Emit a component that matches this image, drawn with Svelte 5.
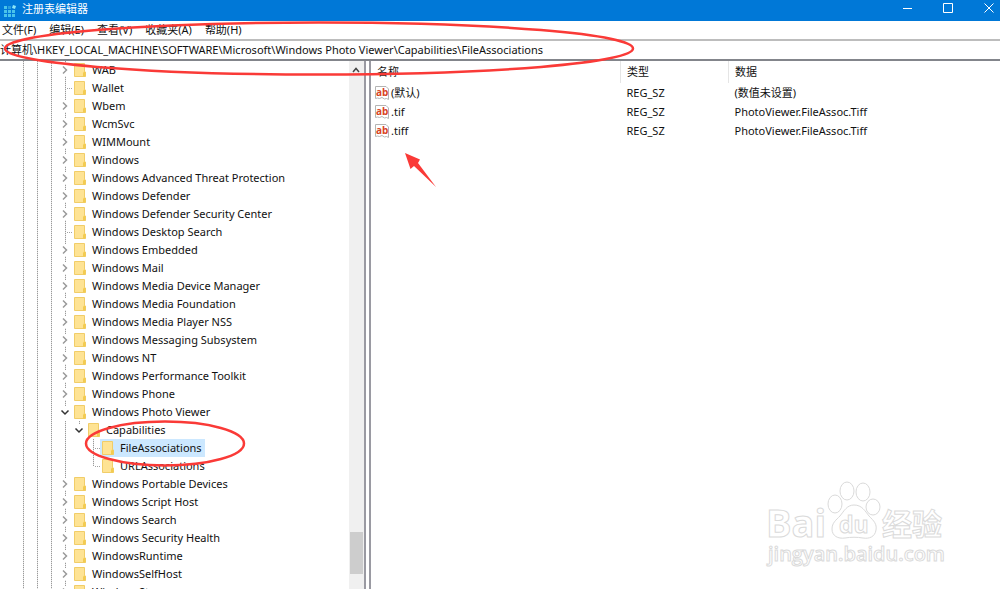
<script lang="ts">
  type Node = { name: string; depth?: number; open?: boolean; leaf?: boolean; last?: boolean };

  const menus = ['文件(F)', '编辑(E)', '查看(V)', '收藏夹(A)', '帮助(H)'];

  const nodes: Node[] = [
    { name: 'WAB' },
    { name: 'Wallet', leaf: true },
    { name: 'Wbem' },
    { name: 'WcmSvc' },
    { name: 'WIMMount' },
    { name: 'Windows' },
    { name: 'Windows Advanced Threat Protection' },
    { name: 'Windows Defender' },
    { name: 'Windows Defender Security Center' },
    { name: 'Windows Desktop Search', leaf: true },
    { name: 'Windows Embedded' },
    { name: 'Windows Mail' },
    { name: 'Windows Media Device Manager' },
    { name: 'Windows Media Foundation' },
    { name: 'Windows Media Player NSS' },
    { name: 'Windows Messaging Subsystem' },
    { name: 'Windows NT' },
    { name: 'Windows Performance Toolkit' },
    { name: 'Windows Phone' },
    { name: 'Windows Photo Viewer', open: true },
    { name: 'Capabilities', depth: 1, open: true },
    { name: 'FileAssociations', depth: 2, leaf: true },
    { name: 'URLAssociations', depth: 2, leaf: true, last: true },
    { name: 'Windows Portable Devices' },
    { name: 'Windows Script Host' },
    { name: 'Windows Search' },
    { name: 'Windows Security Health' },
    { name: 'WindowsRuntime' },
    { name: 'WindowsSelfHost' },
    { name: 'WindowsStore' }
  ];

  const values = [
    { name: '(默认)', type: 'REG_SZ', data: '(数值未设置)' },
    { name: '.tif', type: 'REG_SZ', data: 'PhotoViewer.FileAssoc.Tiff' },
    { name: '.tiff', type: 'REG_SZ', data: 'PhotoViewer.FileAssoc.Tiff' }
  ];

  let selected = $state('FileAssociations');
  let path = $state(
    '计算机\\HKEY_LOCAL_MACHINE\\SOFTWARE\\Microsoft\\Windows Photo Viewer\\Capabilities\\FileAssociations'
  );
</script>

<div class="window">
  <header class="titlebar">
    <svg class="app-icon" viewBox="0 0 14 14" aria-hidden="true">
      <path d="M1 2h3v3H1zM1 6h3v3H1zM1 10h3v3H1zM5 6h3v3H5zM5 10h3v3H5zM9 10h3v3H9zM9 6h3v3H9z" fill="#49c3ea" />
      <path d="M5 2h3v3H5z" fill="#2a9fdc" />
      <path d="M10 1l3 1-1 3-3-1z" fill="#8ce6f7" />
    </svg>
    <span class="title">注册表编辑器</span>
    <div class="controls">
      <button aria-label="最小化">
        <svg viewBox="0 0 10 10"><path d="M0 5.5h9" /></svg>
      </button>
      <button aria-label="最大化">
        <svg viewBox="0 0 10 10"><path d="M.5 .5h9v9h-9z" /></svg>
      </button>
      <button aria-label="关闭">
        <svg viewBox="0 0 10 10"><path d="M.5 .5l9 9M9.500 .5l-9 9" /></svg>
      </button>
    </div>
  </header>

  <nav class="menubar">
    {#each menus as menu (menu)}
      <button>{menu}</button>
    {/each}
  </nav>

  <input class="address" aria-label="地址" bind:value={path} />

  <main>
    <aside>
      <ul class="tree">
        {#each nodes as node (node.name)}
          <li>
            <i class="cell line"></i><i class="cell line"></i><i class="cell line"></i>
            {#if node.depth}<i class="cell line"></i>{/if}
            {#if node.depth === 2}<i class="cell"></i>{/if}
            <span class="cell line" class:leaf={node.leaf} class:last={node.last} class:open={node.open}>
              {#if !node.leaf}
                <svg class="chevron" viewBox="0 0 10 12" aria-hidden="true">
                  <path d={node.open ? 'M1.500 4.500l3.500 3.500 3.500-3.500' : 'M3 2.500l3.500 3.500-3.500 3.500'} />
                </svg>
              {/if}
            </span>
            <button class:selected={selected === node.name} onclick={() => (selected = node.name)}>
              <svg class="folder" viewBox="0 0 12 14" aria-hidden="true">
                <path d="M.5 .5h10v8l1 .5v4.500H.5z" fill="#fee394" stroke="#f1cd68" />
                <path d="M10 8.500l1.500 .5v4.500H9v-3.500z" fill="#f3cb50" />
              </svg>
              <span>{node.name}</span>
            </button>
          </li>
        {/each}
      </ul>
      <div class="scrollbar">
        <svg viewBox="0 0 14 16" aria-hidden="true"><path d="M4 11l3-3.500 3 3.500" /></svg>
        <div class="thumb"></div>
      </div>
    </aside>

    <section class="values">
      <table>
        <thead>
          <tr><th class="name">名称</th><th class="type">类型</th><th>数据</th></tr>
        </thead>
        <tbody>
          {#each values as value (value.name)}
            <tr>
              <td>
                <div class="value-name">
                  <svg viewBox="0 0 14 14" aria-hidden="true">
                    <path d="M.5 .5h10.500l2.500 2.500v10.500l-2-1-2 .5-2.500-1.500-2.500 1-2-.5-2 .5z" fill="#fff" stroke="#b4b4b4" />
                    <text x="1" y="10">ab</text>
                  </svg>
                  {value.name}
                </div>
              </td>
              <td>{value.type}</td>
              <td>{value.data}</td>
            </tr>
          {/each}
        </tbody>
      </table>
    </section>
  </main>

  <svg class="marks" width="640" height="480" viewBox="0 0 640 480" aria-hidden="true">
    <ellipse cx="319" cy="48.500" rx="314" ry="26" />
    <ellipse cx="165" cy="443.500" rx="79" ry="22" />
    <path d="M405 153l15 6.500-2 3.500 18 24-22-21-3.500 3z" />
  </svg>

  <svg class="watermark" width="190" height="96" viewBox="0 0 190 96" aria-hidden="true">
    <text class="logo" x="4" y="62" font-size="38">Bai</text>
    <ellipse cx="73" cy="29" rx="7" ry="9" />
    <ellipse cx="85" cy="16" rx="7" ry="9" />
    <ellipse cx="101" cy="17" rx="7" ry="9" />
    <ellipse cx="111" cy="32" rx="7" ry="8" />
    <path d="M92 30c8 0 11 6 15 11 5 5 8 8 7 14-1 7-7 9-13 8-6-1-12-1-18 0-7 1-13-2-13-9 0-6 4-9 8-13 4-5 7-11 14-11z" />
    <text class="du" x="77" y="58" font-size="23">du</text>
    <text class="cjk" x="120" y="60" font-size="30">经验</text>
    <text class="site" x="6" y="86" font-size="20">jingyan.baidu.com</text>
  </svg>
</div>

<style>
  :global(body) {
    margin: 0;
    overflow: hidden;
  }
  .window {
    position: relative;
    display: flex;
    flex-direction: column;
    height: 100vh;
    overflow: hidden;
    background: #fff;
    color: #111;
    font: 11px/18px 'Noto Sans', 'Noto Sans CJK SC', sans-serif;
  }
  button,
  input {
    font: inherit;
    color: inherit;
    border: 0;
    padding: 0;
    background: transparent;
  }

  .titlebar {
    display: flex;
    align-items: center;
    height: 21px;
    flex-shrink: 0;
    padding-left: 3px;
    background: #0078d7;
    color: #fff;
  }
  .app-icon {
    width: 14px;
    height: 14px;
    margin-right: 5px;
  }
  .title {
    line-height: 16px;
    padding-bottom: 4px;
  }
  .controls {
    display: flex;
    margin-left: auto;
  }
  .controls button {
    width: 40px;
    height: 21px;
    padding-bottom: 6px;
  }
  .controls button:last-child {
    width: 32px;
    padding-left: 10px;
  }
  .controls svg {
    display: block;
    width: 10px;
    height: 10px;
    margin: auto;
    fill: none;
    stroke: #fff;
  }

  .menubar {
    display: flex;
    gap: 13px;
    height: 18px;
    flex-shrink: 0;
    padding-left: 2px;
    border-bottom: 2px solid #bdbdbd;
  }
  .address {
    height: 18px;
    flex-shrink: 0;
    border-bottom: 2px solid #83858b;
    outline: none;
  }

  main {
    flex: 1;
    display: flex;
    min-height: 0;
  }
  aside {
    flex: 0 0 364px;
    display: flex;
    overflow: hidden;
    border-right: 2px solid #9a9aa2;
  }
  .tree {
    flex: 1;
    margin: 0;
    padding: 0 0 0 16px;
    list-style: none;
  }
  .tree li {
    display: flex;
    height: 18px;
  }
  .cell {
    position: relative;
    width: 14px;
    flex-shrink: 0;
  }
  .line {
    background: repeating-linear-gradient(#9a9a9a 0 1px, #e4e4e4 1px 2px) 7px 0 / 1px 100% no-repeat;
  }
  .line.last {
    background-size: 1px 9px;
  }
  .leaf::after {
    content: '';
    position: absolute;
    left: 8px;
    top: 9px;
    width: 6px;
    height: 1px;
    background: repeating-linear-gradient(90deg, transparent 0 1px, #a2a2a2 1px 2px);
  }
  .line.open {
    background-size: 1px 3px;
  }
  .chevron {
    display: block;
    width: 10px;
    height: 12px;
    margin: 3px 2px;
    background: #fff;
    fill: none;
    stroke: #9a9a9a;
    stroke-width: 1.5;
  }
  .open .chevron {
    stroke: #333;
  }
  .tree button {
    display: flex;
    align-items: center;
    height: 18px;
    padding: 0 3px 0 2px;
    white-space: nowrap;
  }
  .tree button span {
    margin-left: 6px;
  }
  .tree .selected {
    background: #cce8ff;
  }
  .folder {
    width: 12px;
    height: 14px;
  }

  .scrollbar {
    display: flex;
    flex-direction: column;
    width: 15px;
    background: #f0f0f0;
  }
  .scrollbar svg {
    width: 14px;
    height: 16px;
    fill: none;
    stroke: #444;
    stroke-width: 1.5;
  }
  .thumb {
    height: 42px;
    margin: auto 1px 15px;
    background: #cdcdcd;
  }

  .values {
    flex: 1;
    margin-left: 3px;
    border-left: 2px solid #9a9aa2;
  }
  table {
    width: 100%;
    table-layout: fixed;
    border-collapse: collapse;
  }
  th {
    height: 22px;
    padding: 0 6px;
    font-weight: 400;
    text-align: left;
    border-right: 1px solid #e5e5e5;
  }
  th:last-child {
    border-right: 0;
  }
  .name {
    width: 237px;
  }
  .type {
    width: 95px;
  }
  td {
    height: 19px;
    padding: 0 6px;
    line-height: 19px;
  }
  td:first-child {
    padding: 0 4px;
  }
  .value-name {
    display: flex;
    align-items: center;
    gap: 2px;
  }
  .value-name svg {
    width: 14px;
    height: 14px;
    overflow: visible;
  }
  .value-name text {
    font: 700 10px 'Open Sans', sans-serif;
    fill: #d8431f;
  }

  .marks {
    position: absolute;
    top: 0;
    left: 0;
    pointer-events: none;
  }
  .marks ellipse {
    fill: none;
    stroke: #fa3a37;
    stroke-width: 2.5;
  }
  .marks path {
    fill: #fa3a37;
  }

  .watermark {
    position: absolute;
    right: 48px;
    bottom: 18px;
    fill: #fff;
    stroke: #dadada;
    pointer-events: none;
  }
  .watermark text {
    font-family: 'Open Sans', sans-serif;
    font-weight: 700;
  }
  .watermark .cjk {
    font-family: 'Noto Sans CJK SC', sans-serif;
  }
  .watermark .site {
    font-weight: 600;
  }
</style>
